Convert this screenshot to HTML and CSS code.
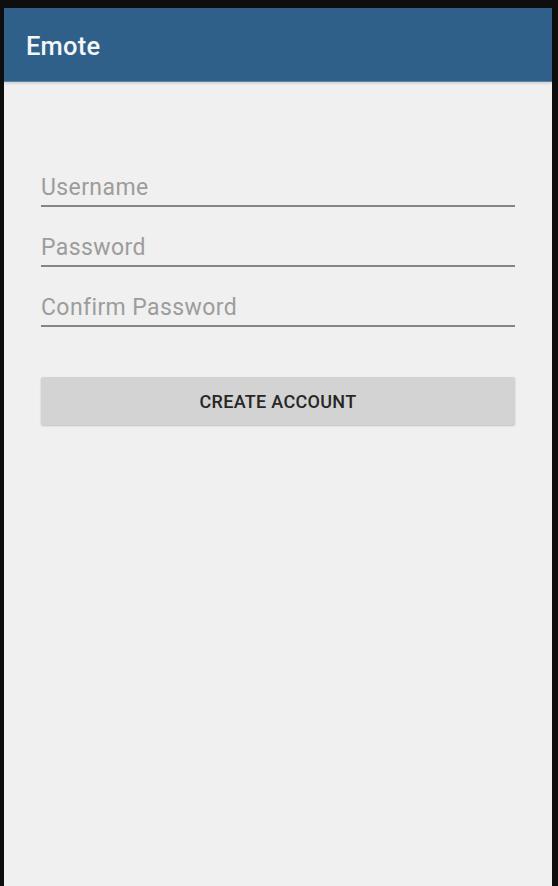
FILE: index.html
```html
<!DOCTYPE html>
<html>
<head>
<meta charset="utf-8">
<link rel="stylesheet" href="styles.css">
</head>
<body>
<div class="screen">
  <header class="appbar"><span class="title">Emote</span></header>
  <main class="content">
    <div class="field"><span class="hint">Username</span></div>
    <div class="field"><span class="hint">Password</span></div>
    <div class="field"><span class="hint">Confirm Password</span></div>
    <button class="btn">CREATE ACCOUNT</button>
  </main>
</div>
</body>
</html>
```
FILE: styles.css
```css
html, body {
  margin: 0;
  padding: 0;
  background: #0e0e0e;
  height: 100%;
  overflow: hidden;
}
.screen {
  margin: 8px 6px 0 4px;
  height: 878px;
  background: #f0f0f0;
  display: flex;
  flex-direction: column;
  font-family: Roboto, "Noto Sans", sans-serif;
}
.appbar {
  height: 74px;
  box-sizing: border-box;
  background: #2f6089;
  border-bottom: 1px solid #5d84a6;
  box-shadow: 0 1px 3px rgba(0,0,0,0.18);
  display: flex;
  align-items: center;
  padding-left: 22px;
  padding-top: 2px;
}
.title {
  color: #f4f6f8;
  font-size: 25.5px;
  font-weight: 500;
  letter-spacing: 0.2px;
}
.content {
  padding: 91px 37px 0 37px;
  display: flex;
  flex-direction: column;
}
.field {
  height: 60px;
  box-sizing: border-box;
  border-bottom: 2px solid #858585;
  display: flex;
  align-items: flex-end;
  padding-bottom: 4px;
}
.field:first-child { height: 34px; }
.hint {
  color: #9c9c9c;
  font-size: 23px;
  line-height: 26px;
  letter-spacing: 0.4px;
}
.btn {
  margin-top: 50px;
  height: 48px;
  border: none;
  border-radius: 2px;
  background: #d3d3d3;
  box-shadow: 0 1px 2px rgba(0,0,0,0.2);
  color: #262626;
  font-family: Roboto, "Noto Sans", sans-serif;
  font-size: 18px;
  font-weight: 500;
  letter-spacing: 0.3px;
  padding: 0;
}
```
